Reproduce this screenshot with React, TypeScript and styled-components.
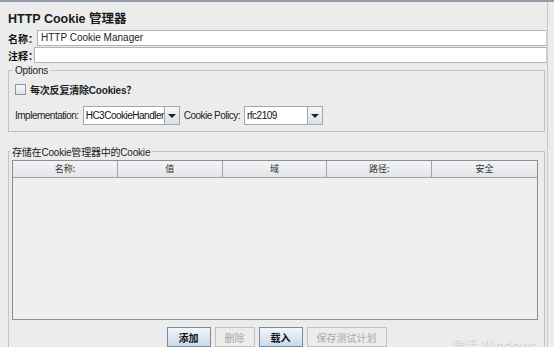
import React from "react";
import styled, { createGlobalStyle } from "styled-components";

const GlobalStyle = createGlobalStyle`
  html, body {
    margin: 0;
    padding: 0;
    background: #ececec;
  }
  body {
    font-family: "Liberation Sans", "Noto Sans CJK SC", sans-serif;
    font-size: 11px;
    color: #111;
  }
`;

const Page = styled.div`
  position: relative;
  width: 554px;
  height: 347px;
  box-sizing: border-box;
  overflow: hidden;
  background: #ececec;
  border-top: 2px solid #8f9cab;
  padding: 7px 8px 0 8px;
  display: flex;
  flex-direction: column;
`;

const RightEdge = styled.div`
  position: absolute;
  top: 0;
  right: 6px;
  bottom: 0;
  width: 1px;
  background: #c9c9c9;
`;

const Title = styled.h1`
  margin: 0;
  height: 21px;
  font-size: 12.5px;
  font-weight: bold;
  font-family: "Liberation Sans", "Noto Sans CJK SC", sans-serif;
  line-height: 21px;
  color: #1a1a1a;
`;

const FieldRow = styled.div`
  display: flex;
  align-items: center;
  height: 16px;
  margin-bottom: 1px;
  margin-right: -1px;
`;

const Label = styled.span<{ w: number }>`
  font-family: "Noto Sans CJK SC", sans-serif;
  font-weight: bold;
  font-size: 10px;
  white-space: nowrap;
  width: ${(p) => p.w}px;
`;

const TextField = styled.div`
  flex: 1;
  height: 14px;
  background: #fff;
  border: 1px solid #b3b3b3;
  border-right-color: #d0d0d0;
  font-size: 10px;
  line-height: 14px;
  padding-left: 3px;
  color: #222;
`;

const Group = styled.fieldset`
  margin: 0;
  border: 1px solid #c4c4c4;
  padding: 2px 6px 6px 6px;
  margin-right: 1px;
`;

const Legend = styled.legend`
  padding: 0 2px;
  margin-left: -2px;
  font-size: 10px;
  letter-spacing: -0.2px;
  color: #222;
  font-family: "Liberation Sans", "Noto Sans CJK SC", sans-serif;
`;

const CheckRow = styled.div`
  display: flex;
  align-items: center;
  gap: 4px;
  height: 16px;
  margin-top: 3px;
`;

const Box = styled.span`
  width: 9px;
  height: 9px;
  border: 1px solid #8895a5;
  background: linear-gradient(#f6f8fb, #dde3ea);
`;

const CheckText = styled.span<{ plain?: boolean }>`
  font-family: "Liberation Sans", "Noto Sans CJK SC", sans-serif;
  font-weight: ${(p) => (p.plain ? "normal" : "bold")};
  font-size: 10px;
  letter-spacing: -0.2px;
  color: #222;
`;

const ComboRow = styled.div`
  display: flex;
  align-items: center;
  gap: 4px;
  margin-top: 9px;
  height: 19px;
`;

const PlainLabel = styled.span`
  font-size: 10px;
  letter-spacing: -0.5px;
  color: #222;
`;

const Combo = styled.div<{ w: number }>`
  display: flex;
  height: 17px;
  width: ${(p) => p.w}px;
  border: 1px solid #a7a7a7;
  background: #fff;
`;

const ComboValue = styled.span`
  flex: 1;
  font-size: 10px;
  letter-spacing: -0.5px;
  line-height: 17px;
  padding-left: 2px;
  border-right: 1px solid #a7a7a7;
  overflow: hidden;
  white-space: nowrap;
`;

const ComboArrow = styled.span`
  width: 14px;
  display: flex;
  align-items: center;
  justify-content: center;
  background: linear-gradient(#f4f7fb, #d6e0ea);
  &::after {
    content: "";
    border-left: 4px solid transparent;
    border-right: 4px solid transparent;
    border-top: 4px solid #222;
  }
`;

const StoreGroup = styled(Group)`
  margin-top: 12px;
  flex: 1;
  padding: 1px 3px 0 3px;
  border-bottom: none;
  display: flex;
  flex-direction: column;
`;

const Table = styled.div`
  border: 1px solid #8e8e8e;
  height: 158px;
  background: #efefef;
  margin-right: 3px;
`;

const HeaderRow = styled.div`
  display: grid;
  grid-template-columns: repeat(5, 1fr);
  height: 16px;
  border-bottom: 1px solid #a4a4a4;
`;

const HeaderCell = styled.div`
  border-right: 1px solid #a4a4a4;
  background: linear-gradient(#f2f3f5, #e3e5e9);
  text-align: center;
  font-family: "Noto Sans CJK SC", sans-serif;
  font-size: 9px;
  line-height: 16px;
  color: #333;
  &:last-child {
    border-right: none;
  }
`;

const ButtonBar = styled.div`
  display: flex;
  justify-content: center;
  gap: 4px;
  margin-top: 7px;
`;

const Button = styled.div<{ disabled?: boolean }>`
  height: 18px;
  padding: 0 ${(p) => (p.disabled ? 9 : 11)}px;
  display: flex;
  align-items: center;
  justify-content: center;
  font-family: "Noto Sans CJK SC", sans-serif;
  font-size: 10px;
  font-weight: ${(p) => (p.disabled ? "normal" : "bold")};
  color: ${(p) => (p.disabled ? "#a9a9a9" : "#111")};
  border: 1px solid ${(p) => (p.disabled ? "#c2c2c2" : "#7b8a9a")};
  background: ${(p) =>
    p.disabled ? "#ececec" : "linear-gradient(#f2f6fb, #c9d9ea)"};
`;

const Watermark = styled.div`
  position: absolute;
  left: 452px;
  top: 334px;
  font-family: "Noto Sans CJK SC", sans-serif;
  font-size: 13px;
  color: #d4d4d4;
  white-space: nowrap;
`;

const columns = ["名称:", "值", "域", "路径:", "安全"];

export default function App() {
  return (
    <>
      <GlobalStyle />
      <Page>
        <RightEdge />
        <Title>HTTP Cookie 管理器</Title>
        <FieldRow>
          <Label w={29}>名称：</Label>
          <TextField>HTTP Cookie Manager</TextField>
        </FieldRow>
        <FieldRow>
          <Label w={26}>注释：</Label>
          <TextField />
        </FieldRow>

        <Group style={{ marginTop: 1 }}>
          <Legend>Options</Legend>
          <CheckRow>
            <Box />
            <CheckText>每次反复清除Cookies？</CheckText>
          </CheckRow>
          <ComboRow>
            <PlainLabel>Implementation:</PlainLabel>
            <Combo w={95}>
              <ComboValue>HC3CookieHandler</ComboValue>
              <ComboArrow />
            </Combo>
            <PlainLabel>Cookie Policy:</PlainLabel>
            <Combo w={77}>
              <ComboValue>rfc2109</ComboValue>
              <ComboArrow />
            </Combo>
          </ComboRow>
        </Group>

        <StoreGroup>
          <Legend>
            <CheckText plain>存储在Cookie管理器中的Cookie</CheckText>
          </Legend>
          <Table>
            <HeaderRow>
              {columns.map((c) => (
                <HeaderCell key={c}>{c}</HeaderCell>
              ))}
            </HeaderRow>
          </Table>
          <ButtonBar>
            <Button>添加</Button>
            <Button disabled>删除</Button>
            <Button>载入</Button>
            <Button disabled>保存测试计划</Button>
          </ButtonBar>
        </StoreGroup>
        <Watermark>激活 Windows</Watermark>
      </Page>
    </>
  );
}
